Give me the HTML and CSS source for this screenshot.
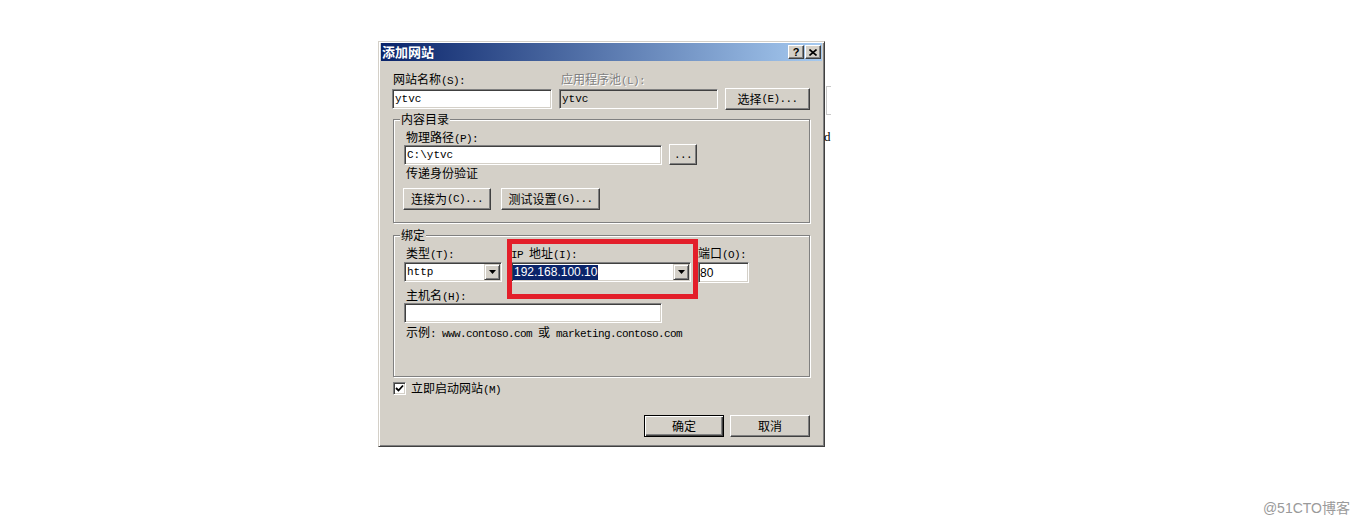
FILE: index.html
```html
<!DOCTYPE html>
<html lang="zh-CN">
<head>
<meta charset="utf-8">
<title>添加网站</title>
<link rel="stylesheet" href="styles.css">
</head>
<body>
<div class="stage">
  <div class="dialog">
    <div class="titlebar">
      <span class="title">添加网站</span>
      <div class="tbtns">
        <span class="tbtn q">?</span>
        <span class="tbtn"><svg width="8" height="7" viewBox="0 0 8 7"><path d="M0.5 0.5 L7.5 6.5 M7.5 0.5 L0.5 6.5" stroke="#000" stroke-width="1.6" fill="none"/></svg></span>
      </div>
    </div>
    <div class="body">
      <div class="row1">
        <div class="lbl l1">网站名称<span class="a">(S):</span></div>
        <div class="lbl l2 dis">应用程序池<span class="a">(L):</span></div>
        <div></div>
        <div class="input"><span class="mono">ytvc</span></div>
        <div class="input disabled"><span class="mono">ytvc</span></div>
        <div class="btn r1btn">选择<span class="a">(E)...</span></div>
      </div>

      <div class="group g1">
        <div class="group-title">内容目录</div>
        <div class="lbl ind">物理路径<span class="a">(P):</span></div>
        <div class="pathrow">
          <div class="input path"><span class="mono">C:\ytvc</span></div>
          <div class="btn dots"><span class="a">...</span></div>
        </div>
        <div class="lbl ind mt1">传递身份验证</div>
        <div class="btnrow">
          <div class="btn b-conn">连接为<span class="a">(C)...</span></div>
          <div class="btn b-test">测试设置<span class="a">(G)...</span></div>
        </div>
      </div>

      <div class="group g2">
        <div class="group-title">绑定</div>
        <div class="binds">
          <div class="col c-type">
            <div class="lbl ind">类型<span class="a">(T):</span></div>
            <div class="select">
              <span class="mono sel-text">http</span>
              <span class="arrow"><svg width="7" height="4" viewBox="0 0 7 4"><path d="M0 0 H7 L3.5 4 Z" fill="#000"/></svg></span>
            </div>
          </div>
          <div class="col c-ip">
            <div class="lbl"><span class="a">IP </span>地址<span class="a">(I):</span></div>
            <div class="select">
              <span class="hl">192.168.100.10</span>
              <span class="arrow"><svg width="7" height="4" viewBox="0 0 7 4"><path d="M0 0 H7 L3.5 4 Z" fill="#000"/></svg></span>
            </div>
          </div>
          <div class="col c-port">
            <div class="lbl">端口<span class="a">(O):</span></div>
            <div class="input port"><span class="sans">80</span></div>
          </div>
        </div>
        <div class="lbl ind host-lbl">主机名<span class="a">(H):</span></div>
        <div class="input host"></div>
        <div class="lbl ind example">示例<span class="a">: www.contoso.com </span>或<span class="a"> marketing.contoso.com</span></div>
        <div class="redbox"></div>
      </div>

      <div class="checkrow">
        <span class="check"><svg width="9" height="9" viewBox="0 0 9 9"><path d="M1 4 L3.5 6.5 L8 1.5" stroke="#000" stroke-width="1.8" fill="none"/></svg></span>
        <span class="lbl">立即启动网站<span class="a">(M)</span></span>
      </div>

      <div class="footer">
        <div class="btn default">确定</div>
        <div class="btn">取消</div>
      </div>
    </div>
  </div>
  <div class="behind-box"></div>
  <div class="behind-d">d</div>
</div>
<div class="watermark">@51CTO博客</div>
</body>
</html>
```

FILE: styles.css
```css
html, body {
  margin: 0;
  padding: 0;
  background: #fff;
}
body {
  width: 1360px;
  height: 523px;
  overflow: hidden;
  position: relative;
  font-family: "Noto Sans CJK SC", "Liberation Sans", sans-serif;
  font-size: 12px;
  line-height: 14px;
  color: #000;
}
.stage {
  position: relative;
  padding: 41px 0 0 378px;
}
.dialog {
  width: 447px;
  height: 406px;
  box-sizing: border-box;
  background: #d4d0c8;
  border: 1px solid;
  border-color: #d4d0c8 #404040 #404040 #d4d0c8;
  box-shadow: inset 1px 1px #fff, inset -1px -1px #808080;
  padding: 1px 2px 2px 2px;
}
.titlebar {
  height: 18px;
  display: flex;
  align-items: center;
  background: linear-gradient(to right, #0a246a, #a6caf0);
  padding: 0 1px 0 1px;
}
.title {
  color: #fff;
  font-weight: bold;
  font-size: 13px;
  line-height: 16px;
}
.tbtns {
  margin-left: auto;
  display: flex;
  gap: 1px;
}
.tbtn {
  width: 16px;
  height: 14px;
  box-sizing: border-box;
  background: #d4d0c8;
  border: 1px solid;
  border-color: #fff #404040 #404040 #fff;
  box-shadow: inset -1px -1px #808080;
  display: flex;
  align-items: center;
  justify-content: center;
}
.tbtn.q {
  font-family: "Liberation Sans", sans-serif;
  font-weight: bold;
  font-size: 11px;
  line-height: 12px;
}
.body {
  padding: 11px 12px 0 11px;
}
.a {
  font-family: "Liberation Mono", monospace;
  font-size: 11px;
  letter-spacing: -0.6px;
}
.mono {
  font-family: "Liberation Mono", monospace;
  font-size: 11px;
}
.sans {
  font-family: "Liberation Sans", sans-serif;
  font-size: 12px;
}
.lbl {
  height: 14px;
  line-height: 14px;
  white-space: nowrap;
}
.dis {
  color: #808080;
  text-shadow: 1px 1px 0 #fff;
}
.row1 {
  display: grid;
  grid-template-columns: 160px 159px 85px;
  grid-template-rows: 14px 20px;
  column-gap: 7px;
  row-gap: 3px;
}
.l1 { padding-left: 1px; }
.l2 { padding-left: 2px; }
.input {
  height: 20px;
  box-sizing: border-box;
  background: #fff;
  border: 1px solid;
  border-color: #808080 #fff #fff #808080;
  box-shadow: inset 1px 1px #404040, inset -1px -1px #d4d0c8;
  padding: 0 2px 0 2px;
  display: flex;
  align-items: center;
}
.input.disabled {
  background: #d4d0c8;
}
.btn {
  box-sizing: border-box;
  height: 22px;
  background: #d4d0c8;
  border: 1px solid;
  border-color: #fff #404040 #404040 #fff;
  box-shadow: inset -1px -1px #808080;
  display: flex;
  align-items: center;
  justify-content: center;
  white-space: nowrap;
}
.btn.default {
  border-color: #000;
  box-shadow: inset 1px 1px #fff, inset -1px -1px #404040, inset -2px -2px #808080;
}
.r1btn {
  margin-top: -1px;
  height: 22px;
}
.group {
  position: relative;
  margin-left: 1px;
  box-sizing: border-box;
  border: 1px solid #808080;
  box-shadow: inset 1px 1px #fff, 1px 1px #fff;
  padding: 10px 10px 0 10px;
}
.group-title {
  position: absolute;
  top: -8px;
  left: 6px;
  padding: 0 1px;
  background: #d4d0c8;
  line-height: 14px;
}
.g1 {
  margin-top: 10px;
  height: 104px;
}
.ind { padding-left: 2px; }
.mt1 { margin-top: 1px; }
.pathrow {
  display: flex;
  align-items: flex-start;
  gap: 7px;
  margin-top: 1px;
}
.input.path { width: 258px; }
.dots {
  width: 28px;
  height: 21px;
  margin-top: -1px;
}
.btnrow {
  display: flex;
  gap: 10px;
  margin-top: 8px;
  margin-left: -1px;
}
.b-conn { width: 88px; }
.b-test { width: 99px; }
.g2 {
  margin-top: 12px;
  height: 142px;
}
.binds {
  display: flex;
  align-items: flex-start;
}
.col {
  display: flex;
  flex-direction: column;
  gap: 2px;
}
.c-type { width: 98px; }
.c-ip { width: 180px; margin-left: 9px; }
.c-port { width: 51px; margin-left: 7px; }
.select {
  height: 20px;
  box-sizing: border-box;
  background: #fff;
  border: 1px solid;
  border-color: #808080 #fff #fff #808080;
  box-shadow: inset 1px 1px #404040, inset -1px -1px #d4d0c8;
  display: flex;
  align-items: center;
}
.sel-text { padding-left: 2px; }
.hl {
  margin-left: 1px;
  padding: 0 1px;
  height: 15px;
  line-height: 15px;
  background: #0a246a;
  color: #fff;
  font-family: "Liberation Sans", sans-serif;
  font-size: 12px;
}
.arrow {
  margin-left: auto;
  margin-right: 1px;
  width: 16px;
  height: 16px;
  box-sizing: border-box;
  background: #d4d0c8;
  border: 1px solid;
  border-color: #d4d0c8 #404040 #404040 #d4d0c8;
  box-shadow: inset 1px 1px #fff, inset -1px -1px #808080;
  display: flex;
  align-items: center;
  justify-content: center;
}
.input.port {
  height: 21px;
  padding-left: 1px;
}
.host-lbl { margin-top: 5px; }
.input.host {
  width: 258px;
  margin-top: 1px;
}
.example { margin-top: 2px; }
.redbox {
  position: absolute;
  left: 113px;
  top: 3px;
  width: 191px;
  height: 60px;
  box-sizing: border-box;
  border: 5px solid #e31e2a;
}
.checkrow {
  display: flex;
  align-items: center;
  margin-top: 4px;
  margin-left: 1px;
  height: 14px;
}
.check {
  width: 13px;
  height: 13px;
  box-sizing: border-box;
  background: #fff;
  border: 1px solid;
  border-color: #808080 #fff #fff #808080;
  box-shadow: inset 1px 1px #404040, inset -1px -1px #d4d0c8;
  display: flex;
  align-items: center;
  justify-content: center;
  margin-right: 5px;
}
.footer {
  display: flex;
  justify-content: flex-end;
  gap: 6px;
  margin-top: 20px;
}
.footer .btn {
  width: 80px;
  height: 22px;
}
.behind-box {
  position: absolute;
  left: 826px;
  top: 86px;
  width: 4px;
  height: 27px;
  border: 1px solid #c8c8c8;
  border-right: none;
}
.behind-d {
  position: absolute;
  left: 824px;
  top: 130px;
  font-family: "Liberation Serif", serif;
  font-size: 13px;
  line-height: 14px;
}
.watermark {
  position: absolute;
  right: 10px;
  bottom: 7px;
  color: #9a9a9a;
  font-family: "Liberation Sans", "Noto Sans CJK SC", sans-serif;
  font-size: 14px;
  line-height: 16px;
}
```
